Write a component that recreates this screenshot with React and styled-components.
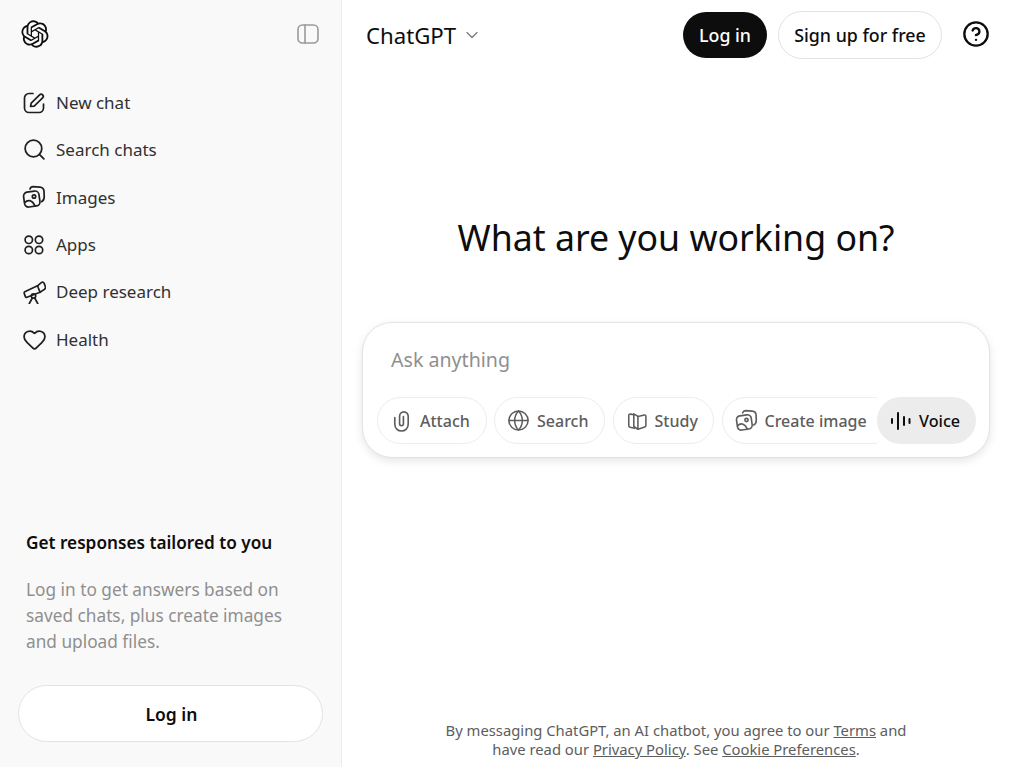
import styled, { createGlobalStyle } from "styled-components";
import { Search, Heart, Globe, ChevronDown, CircleHelp } from "lucide-react";

const GlobalStyle = createGlobalStyle`
  html, body {
    margin: 0;
    padding: 0;
    height: 100%;
    background: #fff;
    overflow: hidden;
  }
  * {
    box-sizing: border-box;
  }
  body {
    font-family: "Noto Sans", "Open Sans", sans-serif;
    color: #0d0d0d;
  }
  svg {
    flex: none;
  }
`;

const Logo = () => (
  <svg width="28" height="28" viewBox="0 0 41 41" fill="currentColor">
    <path d="M37.5324 16.8707C37.9808 15.5241 38.1363 14.0974 37.9886 12.6859C37.8409 11.2744 37.3934 9.91076 36.676 8.68622C35.6126 6.83404 33.9882 5.3676 32.0373 4.4985C30.0864 3.62941 27.9098 3.40259 25.8215 3.85078C24.8796 2.7893 23.7219 1.94125 22.4257 1.36341C21.1295 0.785575 19.7249 0.491269 18.3058 0.500197C16.1708 0.495044 14.0893 1.16803 12.3614 2.42214C10.6335 3.67624 9.34853 5.44666 8.6917 7.47815C7.30085 7.76286 5.98686 8.3414 4.8377 9.17505C3.68854 10.0087 2.73073 11.0782 2.02839 12.312C0.956464 14.1591 0.498905 16.2988 0.721698 18.4228C0.944492 20.5467 1.83612 22.5449 3.268 24.1293C2.81966 25.4759 2.66413 26.9026 2.81182 28.3141C2.95951 29.7256 3.40701 31.0892 4.12437 32.3138C5.18791 34.1659 6.8123 35.6322 8.76321 36.5013C10.7141 37.3704 12.8907 37.5973 14.9789 37.1492C15.9208 38.2107 17.0786 39.0587 18.3747 39.6366C19.6709 40.2144 21.0755 40.5087 22.4946 40.4998C24.6307 40.5054 26.7133 39.8321 28.4418 38.5772C30.1704 37.3223 31.4556 35.5506 32.1119 33.5179C33.5027 33.2332 34.8167 32.6547 35.9659 31.821C37.115 30.9874 38.0728 29.9178 38.7752 28.684C39.8458 26.8371 40.3023 24.6979 40.0789 22.5748C39.8556 20.4517 38.9639 18.4544 37.5324 16.8707ZM22.4978 37.8849C20.7443 37.8874 19.0459 37.2733 17.6994 36.1501C17.7601 36.117 17.8666 36.0586 17.936 36.0161L25.9004 31.4156C26.1003 31.3019 26.2663 31.137 26.3813 30.9378C26.4964 30.7386 26.5563 30.5124 26.5549 30.2825V19.0542L29.9213 20.998C29.9389 21.0068 29.9541 21.0198 29.9656 21.0359C29.977 21.052 29.9842 21.0707 29.9867 21.0902V30.3889C29.9842 32.375 29.1946 34.2791 27.7909 35.6841C26.3872 37.0892 24.4838 37.8806 22.4978 37.8849ZM6.39227 31.0064C5.51397 29.4888 5.19742 27.7107 5.49804 25.9832C5.55718 26.0187 5.66048 26.0818 5.73461 26.1244L13.699 30.7248C13.8975 30.8408 14.1233 30.902 14.3532 30.902C14.583 30.902 14.8088 30.8408 15.0073 30.7248L24.731 25.1103V28.9979C24.7321 29.0177 24.7283 29.0376 24.7199 29.0556C24.7115 29.0736 24.6988 29.0893 24.6829 29.1012L16.6317 33.7497C14.9096 34.7416 12.8643 35.0097 10.9447 34.4954C9.02506 33.9811 7.38785 32.7263 6.39227 31.0064ZM4.29707 13.6194C5.17156 12.0998 6.55279 10.9364 8.19885 10.3327C8.19885 10.4013 8.19491 10.5228 8.19491 10.6071V19.808C8.19351 20.0378 8.25334 20.2638 8.36823 20.4629C8.48312 20.6619 8.64893 20.8267 8.84863 20.9404L18.5723 26.5542L15.206 28.4979C15.1894 28.5089 15.1703 28.5155 15.1505 28.5173C15.1307 28.5191 15.1107 28.516 15.0924 28.5082L7.04046 23.8557C5.32135 22.8601 4.06716 21.2235 3.55289 19.3046C3.03862 17.3858 3.30624 15.3413 4.29707 13.6194ZM31.955 20.0556L22.2312 14.4411L25.5976 12.4981C25.6142 12.4872 25.6333 12.4805 25.6531 12.4787C25.6729 12.4769 25.6928 12.4801 25.7111 12.4879L33.7631 17.1364C34.9967 17.849 36.0017 18.8982 36.6606 20.1613C37.3194 21.4244 37.6047 22.849 37.4832 24.2684C37.3617 25.6878 36.8382 27.0432 35.9743 28.1759C35.1103 29.3086 33.9415 30.1717 32.6047 30.6641C32.6047 30.5947 32.6047 30.4733 32.6047 30.3889V21.188C32.6066 20.9586 32.5474 20.7328 32.4332 20.5338C32.319 20.3348 32.154 20.1698 31.955 20.0556ZM35.3055 15.0128C35.2464 14.9765 35.1431 14.9142 35.069 14.8717L27.1045 10.2712C26.906 10.1554 26.6803 10.0943 26.4504 10.0943C26.2206 10.0943 25.9948 10.1554 25.7963 10.2712L16.0726 15.8858V11.9982C16.0715 11.9783 16.0753 11.9585 16.0837 11.9405C16.0921 11.9225 16.1048 11.9068 16.1207 11.8949L24.1719 7.25025C25.4053 6.53903 26.8158 6.19376 28.2383 6.25482C29.6608 6.31589 31.0364 6.78077 32.2044 7.59508C33.3723 8.40939 34.2842 9.53945 34.8334 10.8531C35.3826 12.1667 35.5464 13.6095 35.3055 15.0128ZM14.2424 21.9419L10.8752 19.9981C10.8576 19.9893 10.8423 19.9763 10.8309 19.9602C10.8195 19.9441 10.8122 19.9254 10.8098 19.9058V10.6071C10.8107 9.18295 11.2173 7.78848 11.9819 6.58696C12.7466 5.38544 13.8377 4.42659 15.1275 3.82264C16.4173 3.21869 17.8524 2.99464 19.2649 3.1767C20.6775 3.35876 22.0089 3.93941 23.1034 4.85067C23.0427 4.88379 22.937 4.94215 22.8668 4.98473L14.9024 9.58517C14.7025 9.69878 14.5366 9.86356 14.4215 10.0626C14.3065 10.2616 14.2466 10.4877 14.2479 10.7175L14.2424 21.9419ZM16.071 17.9991L20.4018 15.4978L24.7325 17.9975V22.9985L20.4018 25.4983L16.071 22.9985V17.9991Z" />
  </svg>
);

const stroke = {
  fill: "none",
  stroke: "currentColor",
  strokeWidth: 1.7,
  strokeLinecap: "round",
  strokeLinejoin: "round",
};

const PanelIcon = () => (
  <svg width="24" height="24" viewBox="0 0 24 24" {...stroke} strokeWidth="1.6">
    <rect x="2" y="3" width="20" height="18" rx="4.500" />
    <path d="M9 3v18" />
  </svg>
);

const PenIcon = ({ size = 24 }) => (
  <svg width={size} height={size} viewBox="0 0 24 24" {...stroke}>
    <path d="M11 2.500H7A4.500 4.500 0 0 0 2.500 7v10A4.500 4.500 0 0 0 7 21.500h10a4.500 4.500 0 0 0 4.500-4.500V13" />
    <path d="M8.500 15.500l.7-3.300 8.400-8.400a2.100 2.100 0 0 1 3 3l-8.400 8.400z" />
  </svg>
);

const ImagesIcon = ({ size = 24 }) => (
  <svg width={size} height={size} viewBox="0 0 24 24" {...stroke}>
    <g transform="rotate(-8 10 14)">
      <rect x="2" y="6.500" width="15.500" height="15" rx="4" />
    </g>
    <circle cx="12" cy="11.500" r="1.700" />
    <path d="M2.800 17.500c2.700-3 7-3 10.200 3.500" />
    <path d="M8 4c.5-1.500 1.500-2.300 3-2.300l7 .5c2.200.2 3.800 1.800 4 4l.2 5.500c.1 2.300-.8 4-2.700 5" />
  </svg>
);

const AppsIcon = ({ size = 24 }) => (
  <svg width={size} height={size} viewBox="0 0 24 24" {...stroke}>
    <circle cx="6.800" cy="6.800" r="3.700" />
    <circle cx="17" cy="6.800" r="3.700" />
    <circle cx="6.800" cy="17" r="3.700" />
    <circle cx="17" cy="17" r="3.700" />
  </svg>
);

const TelescopeIcon = ({ size = 24 }) => (
  <svg width={size} height={size} viewBox="0 0 24 24" {...stroke}>
    <path d="M2.800 11.800L15.500 5.800l2.500 6.500L5 17.200c-.8.3-1.400 0-1.700-.8l-1.100-3c-.2-.7 0-1.300.6-1.600z" />
    <path d="M15.500 5.800l3.800-3.200c1.300-.9 2.500-.4 3 1l1 3c.4 1.400 0 2.500-1.300 3L18 12.300" />
    <circle cx="11.500" cy="16" r="2.200" />
    <path d="M10.300 18l-3 5.500M12.700 18l3 5.500" />
  </svg>
);

const ClipIcon = ({ size = 24 }) => (
  <svg width={size} height={size} viewBox="0 0 24 24" {...stroke}>
    <path d="M5 9v7a7 7 0 0 0 14 0V7.500a4.500 4.500 0 0 0-9 0v8a2 2 0 0 0 4 0V8" />
  </svg>
);

const BookIcon = ({ size = 24 }) => (
  <svg width={size} height={size} viewBox="0 0 24 24" {...stroke}>
    <path d="M8.500 5.200L5 4.500C3.900 4.300 3 5 3 6v11c0 1 .6 1.700 1.500 1.900L9 20" />
    <path d="M8.500 4.200L13 7v14l-4.500-3z" />
    <path d="M13 7l7-1.500c1-.2 1.700.4 1.700 1.400V17c0 .8-.5 1.400-1.200 1.600L13 21" />
  </svg>
);

const VoiceIcon = () => (
  <svg width="24" height="24" viewBox="0 0 24 24" {...stroke} strokeWidth="2">
    <path d="M3 10v4M9 4v16M15 8v8M20.500 10v4" />
  </svg>
);

const navItems = [
  { label: "New chat", icon: <PenIcon /> },
  { label: "Search chats", icon: <Search size={25} strokeWidth={1.7} /> },
  { label: "Images", icon: <ImagesIcon /> },
  { label: "Apps", icon: <AppsIcon /> },
  { label: "Deep research", icon: <TelescopeIcon /> },
  { label: "Health", icon: <Heart size={25} strokeWidth={1.7} /> },
];

const chips = [
  { label: "Attach", icon: <ClipIcon size={23} />, width: 109.5 },
  { label: "Search", icon: <Globe size={23} strokeWidth={1.6} />, width: 111 },
  { label: "Study", icon: <BookIcon size={22} />, width: 101.5 },
  { label: "Create image", icon: <ImagesIcon size={23} />, width: 175 },
];

const App = () => {
  return (
    <Page>
      <GlobalStyle />
      <Sidebar>
        <SideTop>
          <LogoMark>
            <Logo />
          </LogoMark>
          <PanelButton>
            <PanelIcon />
          </PanelButton>
        </SideTop>
        <Nav>
          {navItems.map((item) => (
            <NavRow key={item.label}>
              <NavIcon>{item.icon}</NavIcon>
              <span>{item.label}</span>
            </NavRow>
          ))}
        </Nav>
        <Promo>
          <PromoTitle>Get responses tailored to you</PromoTitle>
          <PromoText>
            Log in to get answers based on
            <br />
            saved chats, plus create images
            <br />
            and upload files.
          </PromoText>
          <SideLogin>Log in</SideLogin>
        </Promo>
      </Sidebar>
      <Main>
        <Header>
          <ModelName>
            ChatGPT
            <ChevronDown size={20} strokeWidth={1.5} color="#7d7d7d" />
          </ModelName>
          <HeaderActions>
            <LoginButton>Log in</LoginButton>
            <SignupButton>Sign up for free</SignupButton>
            <HelpButton>
              <CircleHelp size={28} strokeWidth={2} />
            </HelpButton>
          </HeaderActions>
        </Header>
        <Center>
          <Heading>What are you working on?</Heading>
          <Composer>
            <Placeholder>Ask anything</Placeholder>
            <ComposerRow>
              <ChipRow>
                {chips.map((chip) => (
                  <Chip key={chip.label} $width={chip.width}>
                    {chip.icon}
                    {chip.label}
                  </Chip>
                ))}
              </ChipRow>
              <VoiceButton>
                <VoiceIcon />
                Voice
              </VoiceButton>
            </ComposerRow>
          </Composer>
        </Center>
        <Legal>
          By messaging ChatGPT, an AI chatbot, you agree to our <u>Terms</u> and
          <br />
          have read our <u>Privacy Policy</u>. See <u>Cookie Preferences</u>.
        </Legal>
      </Main>
    </Page>
  );
};

const Page = styled.div`
  display: flex;
  width: 1024px;
  height: 767px;
  overflow: hidden;
`;

const Sidebar = styled.aside`
  width: 342px;
  flex: none;
  display: flex;
  flex-direction: column;
  background: #f9f9f9;
  border-right: 1px solid #ececec;
`;

const SideTop = styled.div`
  display: flex;
  align-items: center;
  justify-content: space-between;
  height: 68px;
  padding: 0 21px 0 21px;
`;

const LogoMark = styled.div`
  display: flex;
  color: #0d0d0d;
`;

const PanelButton = styled.div`
  display: flex;
  color: #9a9a9a;
`;

const Nav = styled.nav`
  display: flex;
  flex-direction: column;
  padding: 11px 0 0 22px;
`;

const NavRow = styled.div`
  display: flex;
  align-items: center;
  gap: 10px;
  height: 47.3px;
  font-size: 17px;
  color: #303030;
`;

const NavIcon = styled.span`
  display: flex;
  justify-content: center;
  width: 24px;
  color: #1f1f1f;
`;

const Promo = styled.div`
  margin-top: auto;
  padding: 0 18px 25px;
`;

const PromoTitle = styled.div`
  padding-left: 8px;
  font-size: 17.2px;
  font-weight: 600;
  line-height: 26px;
  color: #0d0d0d;
`;

const PromoText = styled.p`
  margin: 21px 0 30px;
  padding-left: 8px;
  font-size: 17.25px;
  line-height: 26px;
  color: #8f8f8f;
`;

const SideLogin = styled.button`
  display: block;
  width: 305px;
  height: 57px;
  padding: 0 0 0 2px;
  border: 1px solid #e3e3e3;
  border-radius: 29px;
  background: #fff;
  font: 600 17.5px "Noto Sans", sans-serif;
  color: #0d0d0d;
`;

const Main = styled.main`
  flex: 1;
  display: flex;
  flex-direction: column;
  min-width: 0;
  background: #fff;
`;

const Header = styled.header`
  display: flex;
  align-items: center;
  justify-content: space-between;
  height: 70px;
  padding: 0 34px 0 24px;
`;

const ModelName = styled.div`
  display: flex;
  align-items: center;
  gap: 6px;
  font-size: 22.2px;
  color: #0d0d0d;
`;

const HeaderActions = styled.div`
  display: flex;
  align-items: center;
`;

const LoginButton = styled.button`
  width: 84px;
  height: 46px;
  padding: 0;
  border: none;
  border-radius: 23px;
  background: #0d0d0d;
  color: #fff;
  font: 500 17.8px "Noto Sans", sans-serif;
`;

const SignupButton = styled.button`
  width: 164px;
  height: 48px;
  margin-left: 11px;
  padding: 0;
  border: 1px solid #e3e3e3;
  border-radius: 24px;
  background: #fff;
  color: #0d0d0d;
  font: 500 17.8px "Noto Sans", sans-serif;
`;

const HelpButton = styled.div`
  display: flex;
  margin: 0 0 2px 20px;
  color: #0d0d0d;
`;

const Center = styled.div`
  flex: 1;
  display: flex;
  flex-direction: column;
  padding: 0 34px 0 20px;
`;

const Heading = styled.h1`
  margin: 140px 0 0;
  font-size: 35.7px;
  font-weight: 400;
  line-height: 54px;
  text-align: center;
  color: #0d0d0d;
`;

const Composer = styled.div`
  display: flex;
  flex-direction: column;
  height: 136px;
  margin-top: 58px;
  padding: 0 13px 0 14px;
  border: 1px solid #e3e3e3;
  border-radius: 30px;
  background: #fff;
  box-shadow: 0 3px 8px rgba(0, 0, 0, 0.1);
`;

const Placeholder = styled.div`
  padding: 23px 0 0 14px;
  font-size: 19.6px;
  line-height: 28px;
  color: #8f8f8f;
`;

const ComposerRow = styled.div`
  display: flex;
  align-items: center;
  margin-top: 23px;
`;

const ChipRow = styled.div`
  flex: 1;
  display: flex;
  gap: 7.5px;
  min-width: 0;
  overflow: hidden;
`;

const Chip = styled.div`
  flex: none;
  display: flex;
  align-items: center;
  gap: 7px;
  width: ${(props) => props.$width}px;
  height: 47px;
  padding-left: 12px;
  border: 1px solid #ececec;
  border-radius: 24px;
  font-size: 16px;
  font-weight: 500;
  color: #5d5d5d;
`;

const VoiceButton = styled.div`
  flex: none;
  display: flex;
  align-items: center;
  gap: 6px;
  width: 99px;
  height: 47px;
  padding-left: 12px;
  border-radius: 24px;
  background: #ececec;
  font-size: 16.2px;
  font-weight: 500;
  color: #0d0d0d;
`;

const Legal = styled.p`
  margin: 0 34px 8px 20px;
  font-size: 14.8px;
  line-height: 19px;
  text-align: center;
  color: #5d5d5d;
`;

export default App;
